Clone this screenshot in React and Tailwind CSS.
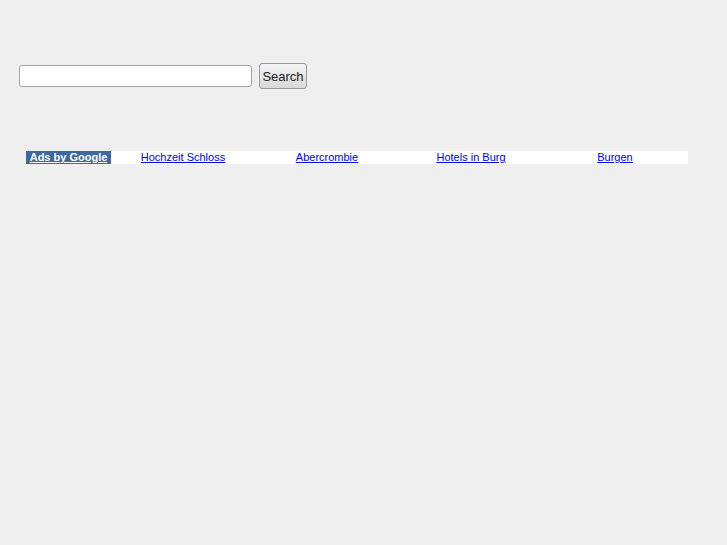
export default function App() {
  const links = ["Hochzeit Schloss", "Abercrombie", "Hotels in Burg", "Burgen"];
  return (
    <div className="w-[727px] h-[545px] bg-[#efefef] overflow-hidden" style={{ fontFamily: '"Liberation Sans", Arial, sans-serif' }}>
      <div className="pt-[63px] pl-[19px] flex items-center gap-[7px]">
        <input type="text" className="w-[233px] h-[22px] bg-white border border-[#a5a5a5] rounded-[3px] outline-none" />
        <button className="w-[48px] h-[26px] rounded-[3px] border border-[#9a9a9a] bg-gradient-to-b from-[#f4f4f4] to-[#d8d8d8] text-[13px] text-[#222] leading-none">Search</button>
      </div>
      <div className="mt-[62px] ml-[26px] flex h-[13px] w-[662px] bg-white text-[11px] leading-[13px]">
        <div className="w-[85px] bg-[#3d6a9c] text-white font-bold underline text-center">Ads by Google</div>
        {links.map((l) => (
          <div key={l} className="w-[144px] text-center">
            <a href="#" className="text-[#0000ee] underline">{l}</a>
          </div>
        ))}
      </div>
    </div>
  );
}
